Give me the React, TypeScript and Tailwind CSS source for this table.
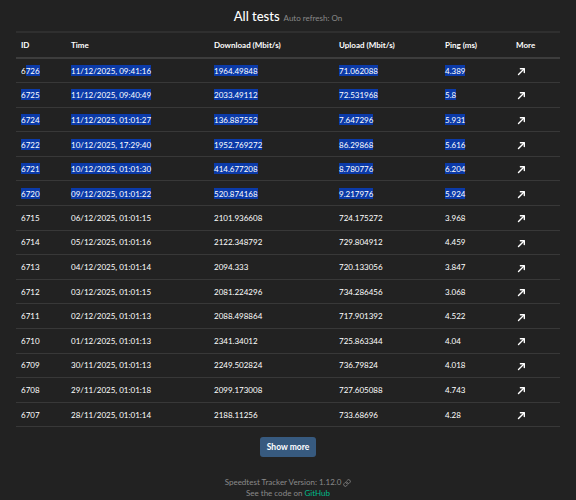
import React from "react";

const rows: [string, string, string, string, string, boolean][] = [
  ["6726", "11/12/2025, 09:41:16", "1964.49848", "71.062088", "4.389", true],
  ["6725", "11/12/2025, 09:40:49", "2033.49112", "72.531968", "5.8", true],
  ["6724", "11/12/2025, 01:01:27", "136.887552", "7.647296", "5.931", true],
  ["6722", "10/12/2025, 17:29:40", "1952.769272", "86.29868", "5.616", true],
  ["6721", "10/12/2025, 01:01:30", "414.677208", "8.780776", "6.204", true],
  ["6720", "09/12/2025, 01:01:22", "520.874168", "9.217976", "5.924", true],
  ["6715", "06/12/2025, 01:01:15", "2101.936608", "724.175272", "3.968", false],
  ["6714", "05/12/2025, 01:01:16", "2122.348792", "729.804912", "4.459", false],
  ["6713", "04/12/2025, 01:01:14", "2094.333", "720.133056", "3.847", false],
  ["6712", "03/12/2025, 01:01:15", "2081.224296", "734.286456", "3.068", false],
  ["6711", "02/12/2025, 01:01:13", "2088.498864", "717.901392", "4.522", false],
  ["6710", "01/12/2025, 01:01:13", "2341.34012", "725.863344", "4.04", false],
  ["6709", "30/11/2025, 01:01:13", "2249.502824", "736.79824", "4.018", false],
  ["6708", "29/11/2025, 01:01:18", "2099.173008", "727.605088", "4.743", false],
  ["6707", "28/11/2025, 01:01:14", "2188.11256", "733.68696", "4.28", false],
];

function Arrow() {
  return (
    <svg width="9" height="9" viewBox="0 0 9 9" className="inline-block">
      <path d="M1.5 7.5 L7 2" stroke="white" strokeWidth="1.4" strokeLinecap="round" />
      <path d="M3.4 1.7 H7.3 V5.6" stroke="white" strokeWidth="1.4" fill="none" strokeLinecap="round" strokeLinejoin="round" />
    </svg>
  );
}

function Sel({ on, children }: { on: boolean; children: React.ReactNode }) {
  return on ? <span className="bg-[#0b3aa8] py-[0.5px]">{children}</span> : <>{children}</>;
}

export default function App() {
  return (
    <div
      className="w-[576px] h-[500px] bg-[#222222] text-white overflow-hidden"
      style={{ fontFamily: "Lato, 'Open Sans', sans-serif" }}
    >
      <div className="flex items-baseline justify-center gap-[4px] pt-[6px] h-[31px]">
        <span className="text-[13px] leading-[20px] font-medium">All tests</span>
        <span className="text-[8px] text-[#8a8a8a]">Auto refresh: On</span>
      </div>
      <div className="mx-[16px]">
        <table className="w-[544px] table-fixed border-collapse text-[8px] leading-[12px]">
          <colgroup>
            <col className="w-[50px]" />
            <col className="w-[143px]" />
            <col className="w-[125px]" />
            <col className="w-[106px]" />
            <col className="w-[71px]" />
            <col className="w-[49px]" />
          </colgroup>
          <thead>
            <tr className="border-t-[2px] border-t-[#2f2f2f] border-b-[2px] border-b-[#3d3d3d] text-left">
              <th className="pl-[5px] py-[6px] font-bold">ID</th>
              <th className="pl-[5px] py-[6px] font-bold">Time</th>
              <th className="pl-[5px] py-[6px] font-bold">Download (Mbit/s)</th>
              <th className="pl-[5px] py-[6px] font-bold">Upload (Mbit/s)</th>
              <th className="pl-[5px] py-[6px] font-bold">Ping (ms)</th>
              <th className="pl-[5px] py-[6px] font-bold">More</th>
            </tr>
          </thead>
          <tbody>
            {rows.map((r, i) => (
              <tr key={r[0]} className="border-b border-[#383838]">
                <td className="pl-[5px] h-[24.6px] py-0">
                  {i === 0 ? (
                    <>
                      6<Sel on>726</Sel>
                    </>
                  ) : (
                    <Sel on={r[5]}>{r[0]}</Sel>
                  )}
                </td>
                <td className="pl-[5px] py-0">
                  <Sel on={r[5]}>{r[1]}</Sel>
                </td>
                <td className="pl-[5px] py-0">
                  <Sel on={r[5]}>{r[2]}</Sel>
                </td>
                <td className="pl-[5px] py-0">
                  <Sel on={r[5]}>{r[3]}</Sel>
                </td>
                <td className="pl-[5px] py-0">
                  <Sel on={r[5]}>{r[4]}</Sel>
                </td>
                <td className="pl-[6px] py-0">
                  <Arrow />
                </td>
              </tr>
            ))}
          </tbody>
        </table>
      </div>
      <div className="flex justify-center pt-[10px]">
        <button className="bg-[#375a7f] rounded-[3px] px-[7px] h-[20px] text-[8.5px] font-bold text-white">
          Show more
        </button>
      </div>
      <div className="flex flex-col items-center pt-[20px] text-[8px] leading-[11px] text-[#8a8a8a]">
        <div className="flex items-center gap-[2px]">
          <span>Speedtest Tracker Version: 1.12.0</span>
          <svg width="8" height="8" viewBox="0 0 24 24" fill="none" stroke="#8a8a8a" strokeWidth="2.5" strokeLinecap="round" strokeLinejoin="round">
            <path d="M10 13a5 5 0 0 0 7.54.54l3-3a5 5 0 0 0-7.07-7.07l-1.72 1.71" />
            <path d="M14 11a5 5 0 0 0-7.54-.54l-3 3a5 5 0 0 0 7.07 7.07l1.71-1.71" />
          </svg>
        </div>
        <div>
          See the code on <span className="text-[#00bc8c]">GitHub</span>
        </div>
      </div>
    </div>
  );
}
